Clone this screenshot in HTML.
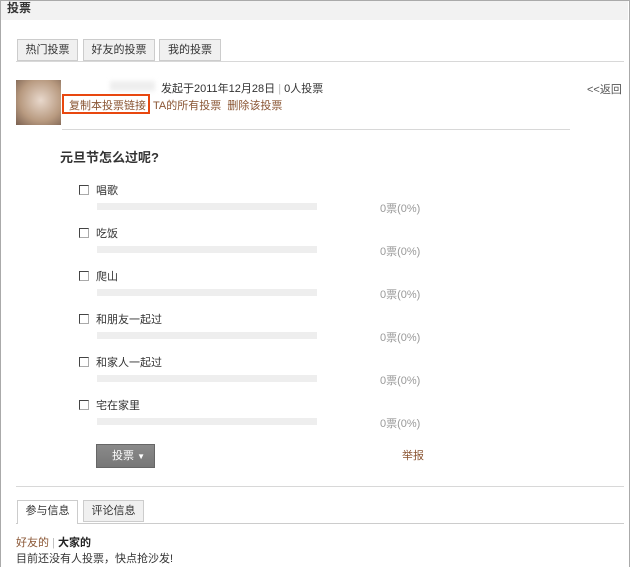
<!DOCTYPE html>
<html><head><meta charset="utf-8"><style>
*{margin:0;padding:0;box-sizing:border-box}
html,body{width:630px;height:567px;overflow:hidden}
body{background:#fff;font-family:"Liberation Sans","Noto Sans CJK SC",sans-serif;font-size:11px;color:#333;position:relative}
.frame{position:absolute;left:0;top:0;width:630px;height:580px;border:1px solid #aaa}
.hd{position:absolute;left:1px;top:1px;width:627px;height:19px;background:#f2f2f2;font-weight:bold;padding-left:6px;line-height:15px;font-size:12px}
.a{position:absolute;white-space:nowrap}
.tab{position:absolute;height:22px;border:1px solid #ccc;background:#f0f0f0;text-align:center;line-height:20px}
.line{position:absolute;height:1px;background:#d8d8d8}
.lk{color:#8a5533}
.cb{position:absolute;width:10px;height:10px;border:1px solid #444;border-right-color:#aaa;border-bottom-color:#aaa;background:#fff}
.bar{position:absolute;left:97px;width:220px;height:7px;background:#eee}
.pct{position:absolute;left:380px;color:#999;font-size:11px}
</style></head><body>
<div class="frame"></div>
<div class="hd">投票</div>
<div class="tab" style="left:17px;top:39px;width:61px">热门投票</div>
<div class="tab" style="left:83px;top:39px;width:72px">好友的投票</div>
<div class="tab" style="left:159px;top:39px;width:62px">我的投票</div>
<div class="line" style="left:16px;top:61px;width:608px"></div>
<div class="a" style="left:16px;top:80px;width:45px;height:45px;background:radial-gradient(circle at 55% 45%,#e8d8cc,#b89a80 60%,#7a6050)"></div>
<div class="a" style="left:110px;top:81px;width:45px;height:10px;background:#eee;filter:blur(2px)"></div>
<div class="a" style="left:161px;top:80px">发起于2011年12月28日 <span style="color:#bbb">|</span> 0人投票</div>
<div class="a" style="left:62px;top:94px;width:88px;height:20px;border:2px solid #e8470f"></div>
<div class="a lk" style="left:69px;top:97px">复制本投票链接</div>
<div class="a lk" style="left:153px;top:97px">TA的所有投票&nbsp; 删除该投票</div>
<div class="a" style="left:587px;top:81px;color:#555">&lt;&lt;返回</div>
<div class="line" style="left:62px;top:129px;width:508px"></div>
<div class="a" style="left:60px;top:147px;font-size:13px;font-weight:bold">元旦节怎么过呢?</div>

<div class="cb" style="left:79px;top:185px"></div><div class="a" style="left:96px;top:182px">唱歌</div><div class="bar" style="top:203px"></div><div class="a pct" style="top:200px">0票(0%)</div>
<div class="cb" style="left:79px;top:228px"></div><div class="a" style="left:96px;top:225px">吃饭</div><div class="bar" style="top:246px"></div><div class="a pct" style="top:243px">0票(0%)</div>
<div class="cb" style="left:79px;top:271px"></div><div class="a" style="left:96px;top:268px">爬山</div><div class="bar" style="top:289px"></div><div class="a pct" style="top:286px">0票(0%)</div>
<div class="cb" style="left:79px;top:314px"></div><div class="a" style="left:96px;top:311px">和朋友一起过</div><div class="bar" style="top:332px"></div><div class="a pct" style="top:329px">0票(0%)</div>
<div class="cb" style="left:79px;top:357px"></div><div class="a" style="left:96px;top:354px">和家人一起过</div><div class="bar" style="top:375px"></div><div class="a pct" style="top:372px">0票(0%)</div>
<div class="cb" style="left:79px;top:400px"></div><div class="a" style="left:96px;top:397px">宅在家里</div><div class="bar" style="top:418px"></div><div class="a pct" style="top:415px">0票(0%)</div>

<div class="a" style="left:96px;top:444px;width:59px;height:24px;background:linear-gradient(#8a8a8a,#777);border:1px solid #666;color:#fff;line-height:22px;padding-left:15px">投票 <span style="font-size:8px">▼</span></div>
<div class="a lk" style="left:402px;top:447px">举报</div>
<div class="line" style="left:16px;top:486px;width:608px"></div>
<div class="tab" style="left:17px;top:500px;width:61px;background:#fff;border-bottom-color:#fff;height:24px">参与信息</div>
<div class="tab" style="left:83px;top:500px;width:61px">评论信息</div>
<div class="line" style="left:16px;top:523px;width:608px;background:#ccc"></div>
<div class="line" style="left:18px;top:523px;width:59px;background:#fff"></div>
<div class="a" style="left:16px;top:534px"><span class="lk">好友的</span> <span style="color:#bbb">|</span> <b style="color:#222">大家的</b></div>
<div class="a" style="left:16px;top:550px">目前还没有人投票，快点抢沙发!</div>
</body></html>
